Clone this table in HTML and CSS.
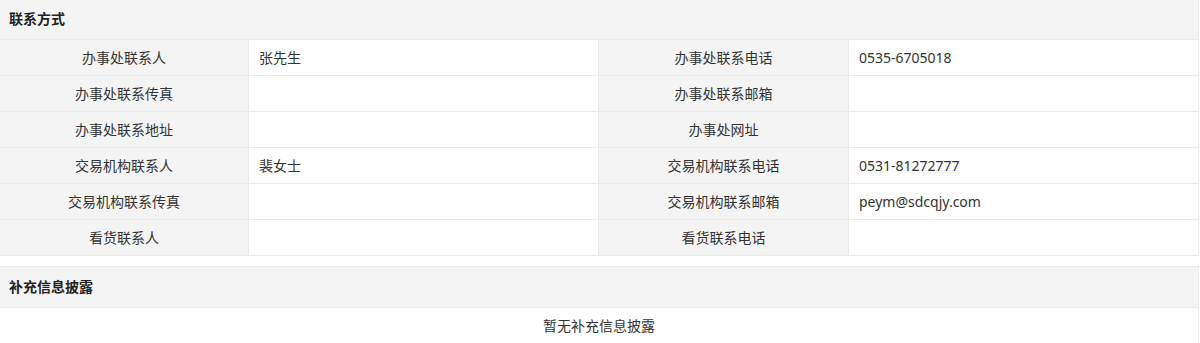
FILE: index.html
```html
<!DOCTYPE html>
<html lang="zh-CN">
<head>
<meta charset="utf-8">
<title>联系方式</title>
<link rel="stylesheet" href="styles.css">
</head>
<body>
<div class="page">
  <section class="panel panel-contact">
    <div class="panel-title">联系方式</div>
    <div class="info-grid">
      <div class="cell label">办事处联系人</div>
      <div class="cell value">张先生</div>
      <div class="cell label">办事处联系电话</div>
      <div class="cell value">0535-6705018</div>

      <div class="cell label">办事处联系传真</div>
      <div class="cell value"></div>
      <div class="cell label">办事处联系邮箱</div>
      <div class="cell value"></div>

      <div class="cell label">办事处联系地址</div>
      <div class="cell value"></div>
      <div class="cell label">办事处网址</div>
      <div class="cell value"></div>

      <div class="cell label">交易机构联系人</div>
      <div class="cell value">裴女士</div>
      <div class="cell label">交易机构联系电话</div>
      <div class="cell value">0531-81272777</div>

      <div class="cell label">交易机构联系传真</div>
      <div class="cell value"></div>
      <div class="cell label">交易机构联系邮箱</div>
      <div class="cell value">peym@sdcqjy.com</div>

      <div class="cell label">看货联系人</div>
      <div class="cell value"></div>
      <div class="cell label">看货联系电话</div>
      <div class="cell value"></div>
    </div>
  </section>

  <section class="panel panel-extra">
    <div class="panel-title">补充信息披露</div>
    <div class="empty">暂无补充信息披露</div>
  </section>
</div>
</body>
</html>
```

FILE: styles.css
```css
html, body {
  margin: 0;
  padding: 0;
  background: #fff;
}

body {
  font-family: "Noto Sans", "Noto Sans CJK SC", sans-serif;
  font-size: 14px;
  color: #333;
}

.page {
  width: 1199px;
}

.panel {
  border: 1px solid #ebebeb;
  border-left: none;
  background: #fff;
}

.panel-contact {
  border-top: none;
}

.panel-extra {
  margin-top: 10px;
  border-bottom: none;
}

.panel-title {
  height: 40px;
  line-height: 40px;
  padding-left: 9px;
  background: #f4f4f4;
  border-bottom: 1px solid #ebebeb;
  font-weight: bold;
  color: #222;
}

.panel-contact .panel-title {
  height: 39px;
  line-height: 38px;
}

.info-grid {
  display: grid;
  grid-template-columns: 248px 349px 249px 349px;
  grid-auto-rows: 35px;
  gap: 1px;
  background: #ebebeb;
}

.cell {
  line-height: 35px;
  white-space: nowrap;
  overflow: hidden;
}

.label {
  background: #f4f4f4;
  text-align: center;
}

.value {
  background: #fff;
  padding-left: 10px;
}

.empty {
  height: 35px;
  line-height: 35px;
  text-align: center;
}
```
